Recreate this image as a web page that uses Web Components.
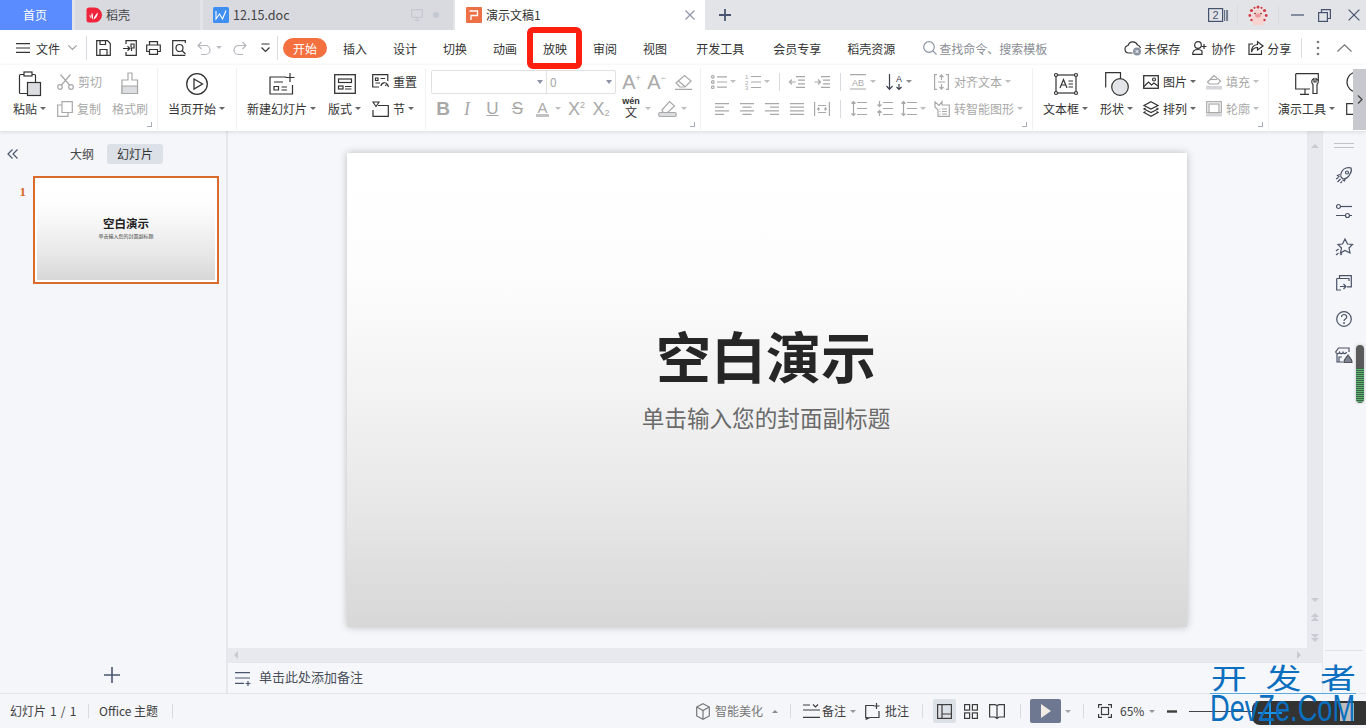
<!DOCTYPE html>
<html lang="zh-CN"><head><meta charset="utf-8"><title>WPS 演示</title>
<style>html,body{margin:0;padding:0;background:#f5f6f9}</style></head><body>
<w-app>
  <w-titlebar>
    <w-home>首页</w-home>
    <w-tab style="width:125px;margin-left:3px"><w-icon n="daoke" style="margin-left:11px"></w-icon><span style="margin-left:4px">稻壳</span></w-tab>
    <w-tab style="width:250px;margin-left:3px"><w-icon n="wdoc" style="margin-left:10px"></w-icon><span style="margin-left:4px;font-size:12.6px;width:56px">12.15.doc</span><w-icon n="monitor" style="margin-left:122px;color:#c5c8d0"></w-icon><w-icon n="dot" style="margin-left:10px"></w-icon></w-tab>
    <w-tab active style="width:250px;margin-left:2px"><w-icon n="pdoc" style="margin-left:11px"></w-icon><span style="margin-left:4px">演示文稿1</span><w-icon n="x" style="margin-left:144px;color:#8f96a6"></w-icon></w-tab>
    <w-icon n="plus14" style="margin-left:13px;color:#4a5670"></w-icon>
    <w-icon n="count" style="margin-left:476px;color:#47536e"></w-icon><w-vsep style="height:20px;margin-left:9px"></w-vsep>
    <w-icon n="pig" style="margin-left:10px"></w-icon><w-vsep style="height:20px;margin-left:10px"></w-vsep>
    <w-icon n="min" style="margin-left:12px;color:#47536e"></w-icon><w-icon n="restore" style="margin-left:14px;color:#47536e"></w-icon><w-icon n="x12" style="margin-left:17px;color:#47536e"></w-icon>
  </w-titlebar>

  <w-menubar>
    <w-icon n="menu"></w-icon><span style="margin-left:6px">文件</span><w-icon n="chev" style="margin-left:8px;color:#9a9da6"></w-icon><w-vsep style="height:24px;margin-left:9px"></w-vsep>
    <w-icon n="save" style="margin-left:9px"></w-icon><w-icon n="saveas" style="margin-left:12px"></w-icon><w-icon n="print" style="margin-left:9px"></w-icon><w-icon n="preview" style="margin-left:11px"></w-icon>
    <w-icon n="undo" style="margin-left:11px;color:#b4b6bc"></w-icon><w-caret style="margin-left:5px;color:#a5a7ad"></w-caret><w-icon n="redo" style="margin-left:11px;color:#b4b6bc"></w-icon><w-icon n="more" style="margin-left:14px"></w-icon><w-vsep style="height:24px;margin-left:7px"></w-vsep>
    <w-pill style="margin-left:5px">开始</w-pill>
    <span style="margin-left:16px">插入</span><span style="margin-left:26px">设计</span><span style="margin-left:26px">切换</span><span style="margin-left:26px">动画</span><span style="margin-left:26px">放映</span><span style="margin-left:26px">审阅</span><span style="margin-left:26px">视图</span><span style="margin-left:29px">开发工具</span><span style="margin-left:29px">会员专享</span><span style="margin-left:26px">稻壳资源</span>
    <w-icon n="search" style="margin-left:28px;color:#8d96a8"></w-icon><span style="margin-left:2px;color:#8a8d94">查找命令、搜索模板</span>
    <w-icon n="cloud" style="margin-left:77px"></w-icon><span style="margin-left:2px">未保存</span><w-icon n="collab" style="margin-left:12px"></w-icon><span style="margin-left:4px">协作</span><w-icon n="share" style="margin-left:13px"></w-icon><span style="margin-left:3px">分享</span>
    <w-vsep style="height:20px;margin-left:10px"></w-vsep><w-icon n="dots" style="margin-left:14px;color:#777"></w-icon><w-icon n="up" style="margin-left:17px;color:#777"></w-icon>
  </w-menubar>

  <w-ribbon>
    <w-group style="width:158px">
      <w-col big style="width:32px;margin-left:13px"><w-icon n="paste"></w-icon><w-item>粘贴<w-caret></w-caret></w-item></w-col>
      <w-col off style="margin-left:12px"><w-item><w-icon n="cut"></w-icon>剪切</w-item><w-item><w-icon n="copy"></w-icon>复制</w-item></w-col>
      <w-col off big style="width:36px;margin-left:10px"><w-icon n="brush"></w-icon><w-item>格式刷</w-item></w-col>
      <w-corner></w-corner>
    </w-group>
    <w-group style="width:79px">
      <w-col big style="width:56px;margin-left:10px"><w-icon n="playc"></w-icon><w-item>当页开始<w-caret></w-caret></w-item></w-col>
    </w-group>
    <w-group style="width:189px">
      <w-col big style="width:68px;margin-left:10px"><w-icon n="newslide"></w-icon><w-item>新建幻灯片<w-caret></w-caret></w-item></w-col>
      <w-col big style="width:33px;margin-left:13px"><w-icon n="layout"></w-icon><w-item>版式<w-caret></w-caret></w-item></w-col>
      <w-col style="margin-left:11px"><w-item><w-icon n="reset"></w-icon>重置</w-item><w-item><w-icon n="section"></w-icon>节<w-caret></w-caret></w-item></w-col>
    </w-group>
    <w-group style="width:275px">
      <w-col style="margin-left:5px">
        <w-row off><w-combo>0</w-combo><w-glyph style="width:17px;margin-left:7px;font-size:20px">A<sup>+</sup></w-glyph><w-glyph style="width:17px;margin-left:8px;font-size:20px">A<sup>−</sup></w-glyph><w-icon n="eraser" style="margin-left:10px"></w-icon></w-row>
        <w-row off><w-glyph style="width:12px;margin-left:6px;font-size:19px;font-weight:700">B</w-glyph><w-glyph style="width:10px;margin-left:13px;font-size:18px;font-style:italic;font-family:'Liberation Serif',serif">I</w-glyph><w-glyph style="width:15px;margin-left:13px;font-size:17px"><u>U</u></w-glyph><w-glyph style="width:15px;margin-left:10px;font-size:17px"><s>S</s></w-glyph><w-glyph style="width:13px;margin-left:11px;font-size:15px;border-bottom:3px solid #c2c2c2;height:17px">A</w-glyph><w-caret style="margin-left:6px"></w-caret><w-glyph style="width:17px;margin-left:7px;font-size:18px">X<sup>2</sup></w-glyph><w-glyph style="width:18px;margin-left:7px;font-size:18px">X<sub>2</sub></w-glyph><w-wen style="margin-left:12px">wén<b>文</b></w-wen><w-caret style="margin-left:5px"></w-caret><w-icon n="marker" style="margin-left:7px"></w-icon><w-caret style="margin-left:4px"></w-caret></w-row>
      </w-col>
      <w-corner></w-corner>
    </w-group>
    <w-group style="width:332px">
      <w-col>
        <w-row off><w-icon n="bullets" style="margin-left:10px"></w-icon><w-caret style="margin-left:3px"></w-caret><w-icon n="numbers" style="margin-left:9px"></w-icon><w-caret style="margin-left:3px"></w-caret><w-vsep style="height:18px;margin-left:9px"></w-vsep><w-icon n="dedent" style="margin-left:9px"></w-icon><w-icon n="indent" style="margin-left:9px"></w-icon><w-vsep style="height:18px;margin-left:10px"></w-vsep><w-icon n="ab" style="margin-left:9px"></w-icon><w-caret style="margin-left:4px"></w-caret><w-icon n="sort" style="margin-left:10px;color:#3c4250"></w-icon><w-caret style="margin-left:3px;color:#666"></w-caret><w-icon n="valign" style="margin-left:22px"></w-icon><span style="margin-left:5px">对齐文本</span><w-caret style="margin-left:3px"></w-caret></w-row>
        <w-row off><w-icon n="al" style="margin-left:14px"></w-icon><w-icon n="ac" style="margin-left:11px"></w-icon><w-icon n="ar" style="margin-left:11px"></w-icon><w-icon n="aj" style="margin-left:11px"></w-icon><w-icon n="ad" style="margin-left:10px"></w-icon><w-vsep style="height:18px;margin-left:10px"></w-vsep><w-icon n="ls1" style="margin-left:10px"></w-icon><w-icon n="ls2" style="margin-left:9px"></w-icon><w-icon n="ls1" style="margin-left:8px"></w-icon><w-caret style="margin-left:3px"></w-caret><w-icon n="smart" style="margin-left:8px"></w-icon><span style="margin-left:4px">转智能图形</span><w-caret style="margin-left:3px"></w-caret></w-row>
      </w-col>
      <w-corner></w-corner>
    </w-group>
    <w-group style="width:236px">
      <w-col big style="width:45px;margin-left:10px"><w-icon n="textbox"></w-icon><w-item>文本框<w-caret></w-caret></w-item></w-col>
      <w-col big style="width:33px;margin-left:12px"><w-icon n="shape"></w-icon><w-item>形状<w-caret></w-caret></w-item></w-col>
      <w-col style="margin-left:10px;width:52px"><w-item><w-icon n="image"></w-icon>图片<w-caret></w-caret></w-item><w-item><w-icon n="arrange"></w-icon>排列<w-caret></w-caret></w-item></w-col>
      <w-col off style="margin-left:11px"><w-item><w-icon n="fill"></w-icon>填充<w-caret></w-caret></w-item><w-item><w-icon n="outline"></w-icon>轮廓<w-caret></w-caret></w-item></w-col>
      <w-corner></w-corner>
    </w-group>
    <w-group last style="width:84px">
      <w-col big style="width:57px;margin-left:9px"><w-icon n="tools"></w-icon><w-item>演示工具<w-caret></w-caret></w-item></w-col>
      <w-col style="margin-left:11px;width:7px"><w-icon n="arc"></w-icon><w-icon n="brk"></w-icon></w-col>
    </w-group>
    <w-fold><w-icon n="right"></w-icon></w-fold>
  </w-ribbon>

  <w-main>
    <w-sidebar>
      <w-sidetabs><w-icon n="dbl"></w-icon><span style="margin-left:52px">大纲</span><w-chip>幻灯片</w-chip></w-sidetabs>
      <w-thumb><b slot="num">1</b><span slot="title">空白演示</span><span slot="sub">单击输入您的封面副标题</span></w-thumb>
      <w-addslide><w-icon n="plus16"></w-icon></w-addslide>
    </w-sidebar>
    <w-stage>
      <w-work>
        <w-pane>
          <w-canvas>
            <w-slide><span slot="title">空白演示</span><span slot="sub">单击输入您的封面副标题</span></w-slide>
          </w-canvas>
          <w-hscroll></w-hscroll>
        </w-pane>
        <w-vscroll></w-vscroll>
      </w-work>
      <w-notes><w-icon n="notes"></w-icon><span style="margin-left:8px">单击此处添加备注</span></w-notes>
    </w-stage>
    <w-rail>
      <w-icon n="lines"></w-icon>
      <w-icon n="rocket"></w-icon><w-icon n="sliders"></w-icon><w-icon n="star"></w-icon><w-icon n="cast"></w-icon><w-icon n="help"></w-icon><w-icon n="store"></w-icon>
      <w-rule></w-rule>
    </w-rail>
  </w-main>

  <w-status>
    <span style="width:67px;word-spacing:1.4px">幻灯片 1 / 1</span><w-vsep style="height:14px;margin-left:11px"></w-vsep><span style="margin-left:10px;width:62px">Office 主题</span><w-vsep style="height:14px;margin-left:11px"></w-vsep>
    <w-icon n="cube" style="margin-left:523px;color:#777"></w-icon><span style="margin-left:5px;width:48px;color:#777">智能美化</span><w-caret up style="margin-left:9px;color:#666"></w-caret><w-vsep style="height:14px;margin-left:12px"></w-vsep>
    <w-icon n="note2" style="margin-left:12px"></w-icon><span style="margin-left:2px;width:24px">备注</span><w-caret style="margin-left:4px;color:#777"></w-caret><w-icon n="comment" style="margin-left:9px"></w-icon><span style="margin-left:5px;width:24px">批注</span><w-vsep style="height:14px;margin-left:13px"></w-vsep>
    <w-viewbtn on style="margin-left:10px"><w-icon n="vnormal"></w-icon></w-viewbtn><w-icon n="vgrid" style="margin-left:8px"></w-icon><w-icon n="vbook" style="margin-left:11px"></w-icon><w-vsep style="height:14px;margin-left:15px"></w-vsep>
    <w-playbtn style="margin-left:9px"><w-icon n="tri"></w-icon></w-playbtn><w-caret style="margin-left:4px;color:#888"></w-caret><w-vsep style="height:14px;margin-left:12px"></w-vsep>
    <w-icon n="fit" style="margin-left:14px"></w-icon><span style="margin-left:8px;width:25px">65%</span><w-caret style="margin-left:4px;color:#777"></w-caret><w-icon n="dash" style="margin-left:12px"></w-icon><w-zoomline style="margin-left:12px"></w-zoomline>
  </w-status>

  <w-gauge></w-gauge>
  <w-highlight></w-highlight>
  <w-watermark><span slot="a">开</span><span slot="b">发</span><span slot="c">者</span><span slot="en">DevZe.CoM</span></w-watermark>
</w-app>

<script>
const FILL='fill="currentColor" stroke="none"';
const ICONS={
daoke:[16,16,`<path d="M3 .5H8.5A7.5 7.5 0 0 1 8.5 15.5H3A2.5 2.5 0 0 1 .5 13V3A2.5 2.5 0 0 1 3 .5Z" fill="#f0243a" stroke="none"/><path d="M6.5 12.5C5 10 5 8 6 5.5C7 8 7.5 10 6.5 12.5ZM7.5 12.5C8 10 9.5 7 12 5.5C11.5 9 10 11.500 7.500 12.500ZM4.500 11.500C3.800 10 3.500 9 3.800 7.500C4.800 8.800 5 10 4.500 11.500Z" fill="#fff" stroke="none"/>`],
wdoc:[16,16,`<rect width="16" height="16" rx="1.500" fill="#3f8ef2" stroke="none"/><path d="M3 4V12L6.500 7L9.500 12L13 3.500" stroke="#fff" stroke-width="1.100"/>`],
pdoc:[16,16,`<rect width="16" height="16" rx="1" fill="#ee7047" stroke="none"/><path d="M3.500 4H11.500V8.500H5V13" stroke="#fff" stroke-width="1.300"/>`],
monitor:[12,12,`<rect x=".6" y=".6" width="10.800" height="7.800" rx=".8"/><path d="M6 8.500V11M3.500 11.400H8.500"/>`],
dot:[6,6,`<circle cx="3" cy="3" r="3" fill="#c4c8d2" stroke="none"/>`],
x:[10,10,`<path d="M.5.5L9.500 9.500M9.500.5L.5 9.500"/>`],
x12:[12,12,`<path d="M.6.6L11.400 11.400M11.400.6L.6 11.400"/>`],
plus14:[14,14,`<path d="M7 1V13M1 7H13" stroke-width="1.800"/>`],
plus16:[16,16,`<path d="M8 0V16M0 8H16" stroke="#4a5670" stroke-width="1.600"/>`],
count:[20,14,`<rect x=".6" y=".6" width="14" height="12.800"/><path d="M16.500 2V13M18.300 2V13M19.600 2V13" stroke-width=".8"/><text x="7.600" y="11" font-size="11" text-anchor="middle" fill="currentColor" stroke="none" font-family="Liberation Sans">2</text>`],
pig:[20,20,`<circle cx="10" cy="10" r="10" fill="#e9e3e4" stroke="none"/><path d="M4.500 14C3.500 7.500 7 4.500 10 4.500S16.500 7.500 15.500 14V20H4.500Z" fill="#f8d3d0" stroke="none"/><ellipse cx="10" cy="10.500" rx="2.800" ry="2" fill="#ec9a9c" stroke="none"/><circle cx="7" cy="8.500" r=".8" fill="#5b2a2a" stroke="none"/><circle cx="13" cy="8.500" r=".8" fill="#5b2a2a" stroke="none"/><g fill="#cf3b47" stroke="none"><circle cx="3.500" cy="5.500" r="1.600"/><circle cx="16.500" cy="5.500" r="1.600"/><circle cx="10" cy="2" r="1.500"/><circle cx="1.800" cy="10.500" r="1.400"/><circle cx="18.200" cy="10.500" r="1.400"/><circle cx="6.500" cy="2.800" r="1.100"/><circle cx="13.500" cy="2.800" r="1.100"/><circle cx="3.500" cy="15" r="1.200"/><circle cx="16.500" cy="15" r="1.200"/></g>`],
min:[13,2,`<path d="M0 1H13"/>`],
restore:[13,13,`<rect x=".6" y="3.600" width="8.800" height="8.800"/><path d="M3.500 3.500V.6H12.400V9.500H9.500"/>`],
menu:[14,10,`<path d="M0 .6H14M0 5H14M0 9.400H14"/>`],
chev:[9,5,`<path d="M.4.4L4.500 4.500L8.600.4"/>`],
up:[15,8,`<path d="M.5 7.500L7.500.8L14.500 7.500"/>`],
save:[15,16,`<path d="M.7.7H11.500L14.300 3.500V15.300H.7Z"/><path d="M4 15V9.500H11V15M4 1V4.500H9.500V1" />`],
saveas:[14,16,`<path d="M3 4V.7H13.300V15.300H3V12"/><path d="M0 8.500H6.500M4.500 6.300L6.800 8.500L4.500 10.700M8 7.500V4H11V8H8.500V11"/>`],
print:[15,14,`<path d="M3.500 4V.7H11.500V4M3.500 10.500H.7V4H14.300V10.500H11.500M3.500 8.500H11.500V13.300H3.500Z"/>`],
preview:[14,16,`<path d="M13.300 3V.7H.7V15.300H13.300"/><circle cx="7.500" cy="8" r="3.500"/><path d="M10 10.500L13.500 14"/>`],
undo:[14,14,`<path d="M4.500 1L1 4.500L4.500 8M1 4.500H8.500A4.500 4.500 0 0 1 8.500 13.500H4"/>`],
redo:[14,14,`<path d="M9.500 1L13 4.500L9.500 8M13 4.500H5.500A4.500 4.500 0 0 0 5.500 13.500H10"/>`],
more:[9,9,`<path d="M.5 1H8.500M.5 4.500L4.500 8.500L8.500 4.500"/>`],
search:[14,14,`<circle cx="6" cy="6" r="5.300"/><path d="M9.800 9.800L13.500 13.500"/>`],
cloud:[18,16,`<path d="M8.500 13H4.500A3.800 3.800 0 0 1 4 5.500A5 5 0 0 1 13.500 5A4 4 0 0 1 16.500 8"/><circle cx="13" cy="11.500" r="4" fill="#8b93a3" stroke="none"/><path d="M11.500 10L14.500 13M14.500 10L11.500 13" stroke="#fff" stroke-width="1"/>`],
collab:[15,14,`<circle cx="6" cy="4" r="3.300"/><path d="M.7 13.300C.7 10 3 8.500 6 8.500C7.500 8.500 9 9 10 10V13.300H.7Z"/><path d="M10 3.500H15M12.500 1V6" transform="translate(-.5 2)"/>`],
share:[16,14,`<path d="M5 3H1V13.300H13.500V9"/><path d="M9.500 .8L15 5L9.500 9V6.500C6 6.500 4.500 8 3.500 11C3.500 7 5.500 3.800 9.500 3.500Z"/>`],
dots:[4,16,`<g ${FILL}><circle cx="2" cy="2" r="1.300"/><circle cx="2" cy="8" r="1.300"/><circle cx="2" cy="14" r="1.300"/></g>`],
paste:[24,26,`<rect x="1.500" y="3.500" width="16" height="19" rx="1"/><rect x="6" y="1" width="8" height="4" fill="#fff"/><rect x="9.500" y="11.500" width="13" height="13" fill="#dcdde1"/>`],
cut:[17,16,`<circle cx="3" cy="13" r="2.300"/><circle cx="14" cy="13" r="2.300"/><path d="M4.500 11L13.500.5M12.500 11L3.500.5"/>`],
copy:[16,16,`<path d="M5 11.500V.7H15.300V11.500Z"/><path d="M5 4H.7V15.300H11V11.500"/>`],
brush:[20,24,`<path d="M8 1H12V8H17.500V21.500H2V8H8Z"/><path d="M2 14H17.500V21.500H2Z" fill="#dcdde1"/>`],
playc:[22,22,`<circle cx="11" cy="11" r="10.300" stroke-width="1.300"/><path d="M8 6L16.500 11L8 16Z" stroke-width="1.300"/>`],
newslide:[26,22,`<path d="M17 4H1V21H23.500V12"/><path d="M21 0V9M16.500 4.500H25.500"/><path d="M5 9H14M5 13.500H9.500V17H5ZM12.500 14H18M12.500 17H18"/>`],
layout:[22,20,`<rect x=".7" y=".7" width="20.600" height="18.600" stroke-width="1.300"/><rect x="4.500" y="5" width="13" height="3.500"/><rect x="4.500" y="12" width="4.500" height="3"/><path d="M11 12.500H17.500M11 15H17.500"/>`],
reset:[17,16,`<path d="M15.800 7V.7H.7V13H7"/><path d="M3.500 4H6V6.500H3.500ZM8.500 4.500H13M3.500 9H8M9 12A3.500 3.500 0 0 1 15.500 10.500M15.500 10.500L16.500 13M15.500 10.500L13 11.500"/>`],
section:[17,16,`<path d="M6 4.500H16.300V15.300H1V9"/><path d="M1 1H7L4 5.500Z" stroke-width="1.100"/>`],
eraser:[17,16,`<path d="M1 9L9.500 1.500L16 7L10 13H5Z"/><path d="M3.500 7L10 12.500M0 15.300H17"/>`],
marker:[19,17,`<path d="M4 10L11.500 1.500L16.500 6L9 13H5.500Z"/><rect x=".7" y="12.500" width="17.500" height="4" rx="1.500" fill="#dcdde1"/>`],
bullets:[16,14,`<circle cx="1.800" cy="1.800" r="1.300"/><circle cx="1.800" cy="7" r="1.300"/><circle cx="1.800" cy="12.200" r="1.300"/><path d="M6 1.800H16M6 7H16M6 12.200H16"/>`],
numbers:[16,16,`<path d="M6 2.500H16M6 8H16M6 13.500H16"/><text x="0" y="5" font-size="6" fill="currentColor" stroke="none" font-family="Liberation Sans">1</text><text x="0" y="10.500" font-size="6" fill="currentColor" stroke="none" font-family="Liberation Sans">2</text><text x="0" y="16" font-size="6" fill="currentColor" stroke="none" font-family="Liberation Sans">3</text>`],
dedent:[16,12,`<path d="M7 .6H16M9 4.200H16M9 7.800H16M7 11.400H16M6.500 6H.5M3 3.500L.5 6L3 8.500"/>`],
indent:[16,12,`<path d="M7 .6H16M9 4.200H16M9 7.800H16M7 11.400H16M.5 6H6.500M4 3.500L6.500 6L4 8.500"/>`],
ab:[16,16,`<path d="M0 .6H16M0 15H16"/><text x="8" y="12" font-size="9" text-anchor="middle" fill="currentColor" stroke="none" font-family="Liberation Sans">AB</text>`],
sort:[17,16,`<path d="M3.500 0V15M.5 12L3.500 15.300L6.500 12M13 10V15.500M10.500 13L13 15.500L15.500 13"/><text x="13" y="8" font-size="9" text-anchor="middle" fill="currentColor" stroke="none" font-family="Liberation Sans">A</text>`],
valign:[15,16,`<path d="M3 .6H.6V15.400H3M12 .6H14.400V15.400H12M7.500 1V6M5.500 3.200L7.500 1L9.500 3.200M7.500 15V10M5.500 12.800L7.500 15L9.500 12.800M4 8H11"/>`],
smart:[16,16,`<path d="M1 1L5 4.500L8 .8V4H15.300V15.300H4V9L1 6Z"/><path d="M8 8H13M8 10.500H13M8 13H13M5.500 8H6.500M5.500 10.500H6.500M5.500 13H6.500"/>`],
al:[14,12,`<path d="M0 .6H14M0 4.200H9M0 7.800H14M0 11.400H9"/>`],
ac:[14,12,`<path d="M0 .6H14M2.500 4.200H11.500M0 7.800H14M2.500 11.400H11.500"/>`],
ar:[14,12,`<path d="M0 .6H14M5 4.200H14M0 7.800H14M5 11.400H14"/>`],
aj:[14,12,`<path d="M0 .6H14M0 4.200H14M0 7.800H14M0 11.400H14"/>`],
ad:[16,14,`<path d="M.6 0V14M15.400 0V14M4 3.500H12M3.500 7H6M10 7H12.500M4 10.500H12M3.500 7L5 5.500M3.500 7L5 8.500M12.500 7L11 5.500M12.500 7L11 8.500"/>`],
ls1:[16,15,`<path d="M6 1.500H16M6 7.500H16M6 13.500H16M2.500 .5V14.500M.5 2.500L2.500 .5L4.500 2.500M.5 12.500L2.500 14.500L4.500 12.500"/>`],
ls2:[17,15,`<path d="M7 1.500H17M7 7.500H17M7 13.500H17M3.500 0V5.500M1.500 3.500L3.500 5.500L5.500 3.500M3.500 15V9.500M1.500 11.500L3.500 9.500L5.500 11.500"/>`],
textbox:[24,22,`<rect x="2" y="2" width="20" height="18"/><g fill="#fff"><circle cx="2" cy="2" r="1.500"/><circle cx="22" cy="2" r="1.500"/><circle cx="2" cy="20" r="1.500"/><circle cx="22" cy="20" r="1.500"/></g><path d="M6 15L9.500 6.500L13 15M7.300 12H11.700M14.500 8H19M14.500 11H19M14.500 14H19"/>`],
shape:[24,24,`<path d="M.7 15.500V.7H15.500V7"/><circle cx="15" cy="15" r="8.300" fill="#e3e4e7"/>`],
image:[16,14,`<rect x=".7" y=".7" width="14.600" height="12.600" stroke-width="1.300"/><path d="M1 11.500L5.500 7L8.500 10L11 8L15 11" stroke-width="1.200"/><circle cx="11" cy="4.500" r="1.500"/>`],
arrange:[16,16,`<path d="M8 .8L15 4.500L8 8L1 4.500Z"/><path d="M2.500 7L1 8L8 11.500L15 8L13.500 7M2.500 10.500L1 11.500L8 15.200L15 11.500L13.500 10.500"/>`],
fill:[16,16,`<path d="M1.500 8L8 1.500L14.500 7L12 10H3.500Z"/><path d="M4 5.500L11 5.500"/><rect x="0" y="12" width="16" height="3.500" fill="#d5d6da" stroke="none"/>`],
outline:[16,16,`<rect x=".7" y=".7" width="14.600" height="11"/><rect x="3" y="3" width="10" height="8.700"/><rect x="0" y="13" width="16" height="2.500" fill="#d5d6da" stroke="none"/>`],
tools:[24,22,`<path d="M.7.7H23.300V8M15 16H.7V.7"/><path d="M10 16V21M5 21.300H14"/><path d="M18 11.500A3.500 3.500 0 0 1 19 5.500V9H21V5.500A3.500 3.500 0 0 1 22 11.500V20.500H18Z" fill="#fff"/>`],
arc:[7,22,`<circle cx="11" cy="11" r="10"/>`],
brk:[7,12,`<path d="M7 .7H.7V11.300H7"/>`],
right:[6,9,`<path d="M1 .5L5 4.500L1 8.500" stroke="#444" stroke-width="1.300"/>`],
dbl:[11,10,`<path d="M5.500.5L1 5L5.500 9.500M10.500.5L6 5L10.500 9.500" stroke="#4a5670" stroke-width="1.200"/>`],
notes:[16,13,`<path d="M0 .6H15M0 6H15M0 11.400H9" stroke="#4a5670"/><path d="M13 9V14M10.500 11.500H15.500" stroke="#4a5670"/>`],
lines:[20,6,`<path d="M0 .5H20M0 4.500H20" stroke="#c0c3ca"/>`],
rocket:[18,18,`<path d="M6 11C5 8 7 3 11 2C13 1.500 15 1.500 16 2C16.500 4 16 7 15 8C13.500 11.500 9.500 14 7.500 12.500Z"/><circle cx="12" cy="6.500" r="1.500"/><path d="M5 8.500L2.500 9.500L4.500 11M10 13L9.500 15L7.500 14M1 13L3.500 11.500M2.500 16L5.500 13M5.500 17L7 15.500"/>`],
sliders:[16,14,`<circle cx="2.500" cy="2.500" r="2"/><path d="M4.500 2.500H16"/><circle cx="11.500" cy="11.500" r="2"/><path d="M0 11.500H9.500M13.500 11.500H16"/>`],
star:[18,18,`<path d="M10 1L12.500 6L17.500 6.500L14 10L15 15L10 12.500L5.500 15L6.500 10L3 6.500L7.500 6Z"/><path d="M1 13L3.500 11M1 17L3.500 15M5.500 17L7 15.500"/>`],
cast:[16,16,`<path d="M3.500 3.500V.7H15.300V11.800H11"/><path d="M.7 3.500H13V6M.7 3.500V15H5M4 11.500H10M7.500 9L10 11.500L7.500 14"/>`],
help:[16,16,`<circle cx="8" cy="8" r="7.300"/><path d="M5.500 6C5.500 4.500 6.800 3.500 8 3.500C9.500 3.500 10.700 4.500 10.700 6C10.700 8 8 8 8 10"/><circle cx="8" cy="12" r=".9" ${FILL}/>`],
store:[18,16,`<path d="M2 6V15H8M14 5V1H3.500L.7 5C1 7 4 7 4.500 5.500C5 7 7.500 7 8 5.500C8.500 7 11 7 11.500 5"/><path d="M4 15V10H7"/><path d="M9 15.500C8.500 12.500 11 11 13 8C15 11 17.500 12.500 17 15.500Z" fill="#7c8494" stroke="#555"/>`],
cube:[14,17,`<path d="M7 .7L13.300 4V13L7 16.300L.7 13V4Z"/><path d="M.7 4L7 7.500L13.300 4M7 7.500V16"/>`],
note2:[17,14,`<path d="M0 6H17M0 13.300H17M0 1H7M10 .5L12.500 3L15 .5"/>`],
comment:[15,17,`<path d="M9 2.500H.7V14.500H2.500L.7 16.500L5 14.500H14V8"/><path d="M11.500 0V6M8.500 3H14.500"/>`],
vnormal:[15,15,`<rect x=".6" y=".6" width="13.800" height="13.800"/><path d="M5 .6V14.400M5 10H14.400"/>`],
vgrid:[14,15,`<rect x=".6" y=".6" width="5" height="5.500"/><rect x="8.400" y=".6" width="5" height="5.500"/><rect x=".6" y="8.900" width="5" height="5.500"/><rect x="8.400" y="8.900" width="5" height="5.500"/>`],
vbook:[16,15,`<path d="M8 1.500L6 .6H.6V13H6L8 14.500L10 13H15.400V.6H10ZM8 1.500V14"/>`],
tri:[10,14,`<path d="M0 0L10 7L0 14Z" fill="#f1ece4" stroke="none"/>`],
fit:[14,14,`<path d="M.6 4V.6H4M10 .6H13.400V4M13.400 10V13.400H10M4 13.400H.6V10"/><rect x="3.500" y="3.500" width="7" height="7"/>`],
dash:[10,3,`<path d="M0 1.500H10" stroke-width="2.400"/>`]
};
const def=(name,css,html='<slot></slot>')=>customElements.define(name,class extends HTMLElement{
  constructor(){super();this.attachShadow({mode:'open'}).innerHTML=`<style>${css}</style>${html}`;}
});
customElements.define('w-icon',class extends HTMLElement{
  constructor(){super();this.attachShadow({mode:'open'});}
  connectedCallback(){
    const [w,h,body]=ICONS[this.getAttribute('n')];
    this.shadowRoot.innerHTML=`<style>:host{display:inline-flex;flex:none;align-items:center;justify-content:center}svg{display:block;overflow:visible}</style><svg width="${w}" height="${h}" viewBox="0 0 ${w} ${h}" fill="none" stroke="currentColor" stroke-width="1.200">${body}</svg>`;
  }
});
def('w-app',`:host{display:flex;flex-direction:column;position:relative;width:1366px;height:728px;overflow:hidden;background:#f5f6f9;font:12px/16px "Noto Sans CJK SC","Liberation Sans",sans-serif;color:#333}`);
def('w-titlebar',`:host{display:flex;align-items:center;flex:none;height:30px;background:#e2e4e8;color:#444}`);
def('w-home',`:host{display:flex;align-items:center;justify-content:center;flex:none;width:72px;height:30px;background:#5b8cff;color:#fff;box-sizing:border-box;padding-right:2px}`);
def('w-tab',`:host{display:flex;align-items:center;flex:none;height:30px;background:#d9dadf}:host([active]){background:#fff;color:#333}`);
def('w-vsep',`:host{display:block;flex:none;width:1px;background:#d9dbe0}`);
def('w-menubar',`:host{display:flex;align-items:center;flex:none;height:35px;padding-left:16px;background:#fff;color:#333}::slotted(span){padding-top:2px}`);
def('w-pill',`:host{display:flex;align-items:center;justify-content:center;flex:none;width:44px;height:20px;box-sizing:border-box;padding-top:1px;border-radius:10px;background:#f5703f;color:#fff;margin-top:1px}`);
def('w-caret',`:host{display:inline-block;flex:none;width:0;height:0;border-left:3px solid transparent;border-right:3px solid transparent;border-top:3.500px solid currentColor;margin-left:3px;opacity:.75}:host([up]){border-top:0;border-bottom:3.500px solid currentColor}`);
def('w-ribbon',`:host{display:flex;flex:none;height:66px;background:#fff;position:relative;z-index:1;box-shadow:0 1px 4px rgba(0,0,0,.12);overflow:hidden}`);
def('w-group',`:host{display:flex;flex:none;box-sizing:border-box;height:62px;margin-top:3px;padding-bottom:4px;border-right:1px solid #f0f1f3;position:relative}:host([last]){border-right:0;overflow:hidden}`);
def('w-col',`:host{display:grid;grid-template-rows:27px 27px;align-items:center;justify-items:start;flex:none;color:#333;line-height:16px}:host([big]){justify-items:center}:host([big]) ::slotted(w-icon){margin-top:4px}:host([off]){color:#a8a8a8}`);
def('w-item',`:host{display:inline-flex;align-items:center;gap:4px;white-space:nowrap;margin-top:0}::slotted(w-caret){margin-left:-1px}`);
def('w-row',`:host{display:flex;align-items:center;white-space:nowrap}:host([off]){color:#a8a8a8}`);
def('w-corner',`:host{position:absolute;right:5px;bottom:3px;width:4px;height:4px;border-right:1px solid #a8adb8;border-bottom:1px solid #a8adb8}`);
def('w-combo',`:host{display:flex;align-items:center;flex:none;box-sizing:border-box;width:185px;height:24px;border:1px solid #e1e1e1;border-radius:2px;position:relative;color:#a8a8a8}
 .f{width:115px;height:100%;border-right:1px solid #e1e1e1;display:flex;align-items:center;justify-content:flex-end;box-sizing:border-box;padding-right:3px}
 .s{flex:1;display:flex;align-items:center;justify-content:space-between;padding:0 3px}i{display:block;width:0;height:0;border-left:3.500px solid transparent;border-right:3.500px solid transparent;border-top:4px solid #8b93a5}`,
 `<div class="f"><i></i></div><div class="s"><slot></slot><i></i></div>`);
def('w-glyph',`:host{display:inline-flex;flex:none;align-items:center;justify-content:center;box-sizing:border-box;height:22px;font-family:"Liberation Sans",sans-serif;line-height:1;color:#a8a8a8}
 ::slotted(sup){font-size:9px;line-height:10px;align-self:flex-start;margin-top:2px}::slotted(sub){font-size:9px;line-height:10px;align-self:flex-end;margin-bottom:2px}`);
def('w-wen',`:host{display:inline-flex;flex-direction:column;align-items:center;flex:none;width:18px;height:23px;font:700 9px/9px "Liberation Sans",sans-serif;color:#333;padding-bottom:1px}::slotted(b){font:400 12px/12px "Noto Sans CJK SC",sans-serif}`);
def('w-fold',`:host{display:flex;align-items:center;justify-content:center;flex:none;width:13px;height:61px;margin-top:4px;background:#c8c9ce}`);
def('w-main',`:host{display:flex;flex:1;min-height:0}`);
def('w-sidebar',`:host{display:flex;flex-direction:column;flex:none;width:226px;border-right:2px solid #e5e7ed;background:#f5f6f9}`);
def('w-sidetabs',`:host{display:flex;align-items:center;height:20px;margin-top:13px;padding-left:7px;color:#444}`);
def('w-chip',`:host{display:flex;align-items:center;justify-content:center;flex:none;width:56px;height:20px;margin-left:13px;background:#dce0e7;border-radius:3px;color:#333}`);
def('w-thumb',`:host{display:flex;margin-top:12px}
 .n{width:33px;box-sizing:border-box;padding:8px 7px 0 0;text-align:right;color:#d9692a;font:700 13px/16px "Liberation Serif",serif}
 .o{box-sizing:border-box;width:186px;height:108px;border:2px solid #d96c2c;padding:2px;background:#fff}
 .s{height:100%;background:linear-gradient(#fff 0%,#fdfdfd 25%,#f3f3f3 50%,#e7e7e7 75%,#d7d7d7 100%);display:flex;flex-direction:column;align-items:center;padding-top:34px;box-sizing:border-box}
 .t{font-weight:700;font-size:11.500px;line-height:18px;color:#222}.u{font-size:5px;line-height:6px;margin-top:1px;color:#444}`,
 `<div class="n"><slot name="num"></slot></div><div class="o"><div class="s"><div class="t"><slot name="title"></slot></div><div class="u"><slot name="sub"></slot></div></div></div>`);
def('w-addslide',`:host{display:flex;justify-content:center;align-items:center;margin-top:auto;height:36px;box-sizing:border-box;padding-right:2px}`);
def('w-stage',`:host{display:flex;flex-direction:column;flex:none;width:1094px;border-right:1px solid #e5e7ed}`);
def('w-work',`:host{display:flex;flex:1;min-height:0}`);
def('w-pane',`:host{display:flex;flex-direction:column;flex:1;min-width:0}`);
def('w-canvas',`:host{display:block;flex:1;min-height:0;box-sizing:border-box;padding:22px 0 0 119px;background:#f6f7fa}`);
def('w-hscroll',`:host{display:flex;align-items:center;justify-content:space-between;flex:none;height:14px;padding:0 6px;background:#e8e9ee}
 i{display:block;width:0;height:0;border-top:4px solid transparent;border-bottom:4px solid transparent}.l{border-right:4px solid #c8cad1}.r{border-left:4px solid #c8cad1}`,
 `<i class="l"></i><i class="r"></i>`);
def('w-slide',`:host{display:flex;flex-direction:column;align-items:center;width:840px;height:474px;box-sizing:border-box;padding-top:166px;background:linear-gradient(#fff 0%,#fdfdfd 25%,#f3f3f3 50%,#e7e7e7 75%,#d7d7d7 100%);box-shadow:0 0 8px rgba(0,0,0,.24)}
 .t{font-size:55px;font-weight:700;line-height:70px;color:#262626;margin-right:2px}.u{font-size:22.600px;line-height:30px;margin-top:14px;color:#6a6a6a;margin-right:2px}`,
 `<div class="t"><slot name="title"></slot></div><div class="u"><slot name="sub"></slot></div>`);
def('w-vscroll',`:host{display:block;flex:none;width:15px;background:#e8e9ee;position:relative}
 i{position:absolute;left:4px;width:0;height:0;border-left:4px solid transparent;border-right:4px solid transparent}
 .u{border-bottom:4px solid #c8cad1}.d{border-top:4px solid #c8cad1}`,
 `<i class="u" style="top:13px"></i><i class="d" style="top:467px"></i><i class="u" style="top:482px"></i><i class="u" style="top:486px"></i><i class="d" style="top:503px"></i><i class="d" style="top:507px"></i>`);
def('w-notes',`:host{display:flex;align-items:center;flex:none;height:30px;box-sizing:content-box;border-top:1px solid #e5e7ed;padding:0 0 0 7px;background:#f6f7fa;font-size:13px;color:#4a4f5a}::slotted(span){padding-bottom:3px}`);
def('w-rail',`:host{display:flex;flex-direction:column;align-items:center;flex:1;min-width:0;box-sizing:border-box;padding:12px 2px 0 0;background:#f5f6f9}
 ::slotted(w-icon){color:#4a5266;height:18px;margin-top:18px}::slotted(w-icon:first-child){height:6px;margin-top:0;margin-bottom:-1px}`);
def('w-rule',`:host{display:block;width:38px;height:1px;background:#e0e2e7;margin-top:auto;margin-bottom:42px}`);
def('w-status',`:host{display:flex;align-items:center;flex:none;height:34px;padding-left:10px;border-top:1px solid #e3e5ea;background:#f5f6f9;color:#3d3d3d;white-space:nowrap}::slotted(span){flex:none;display:block}`);
def('w-viewbtn',`:host{display:flex;align-items:center;justify-content:center;flex:none;width:23px;height:24px;border-radius:2px}:host([on]){background:#dce0e7}`);
def('w-playbtn',`:host{display:flex;align-items:center;justify-content:center;flex:none;width:31px;height:24px;border-radius:2px;background:#6e7891}`);
def('w-zoomline',`:host{display:block;flex:none;width:110px;height:1px;background:#444}`);
def('w-gauge',`:host{position:absolute;left:1356px;top:345px;width:8px;height:58px;box-sizing:border-box;border-radius:4px;background:linear-gradient(#5a5a5a 0 23px,transparent 23px),repeating-linear-gradient(#55b56a 0 1px,#46604f 1px 2px);box-shadow:0 0 3px rgba(0,0,0,.25);z-index:4}`);
def('w-highlight',`:host{position:absolute;left:527px;top:27px;width:55px;height:42px;box-sizing:border-box;border:6px solid #ff1f10;border-radius:6px;z-index:5}`);
def('w-watermark',`:host{position:absolute;left:0;top:0;width:1366px;height:728px;z-index:6;pointer-events:none;overflow:hidden}
 .pill{position:absolute;left:1252px;top:701px;width:120px;height:24px;border-radius:8px;background:#333}
 .k{position:absolute;left:1340px;top:703px;width:14px;height:18px;background:#bdbdbd}
 .c1{position:absolute;left:1269px;top:703px;width:2px;height:22px;background:#1a93e6}
 .c2{position:absolute;left:1258px;top:712px;width:24px;height:2px;background:#1a93e6}
 .rule{position:absolute;left:1210px;top:693px;width:146px;height:1px;background:#5aa9e0}
 .cn{position:absolute;left:1211px;top:654px;display:flex;gap:18.500px;font:36px/46px "Noto Sans CJK SC",sans-serif;color:#0b6fbf;transform:scaleY(.78);transform-origin:0 50%;white-space:nowrap}
 .en{position:absolute;left:1210px;top:688px;font:37px/42px "Liberation Sans",sans-serif;color:#0b6fbf;transform:scaleX(.735);transform-origin:0 50%;white-space:nowrap}`,
 `<div class="pill"></div><div class="k"></div><div class="c1"></div><div class="c2"></div><div class="rule"></div><div class="cn"><slot name="a"></slot><slot name="b"></slot><slot name="c"></slot></div><div class="en"><slot name="en"></slot></div>`);
</script>
</body></html>
